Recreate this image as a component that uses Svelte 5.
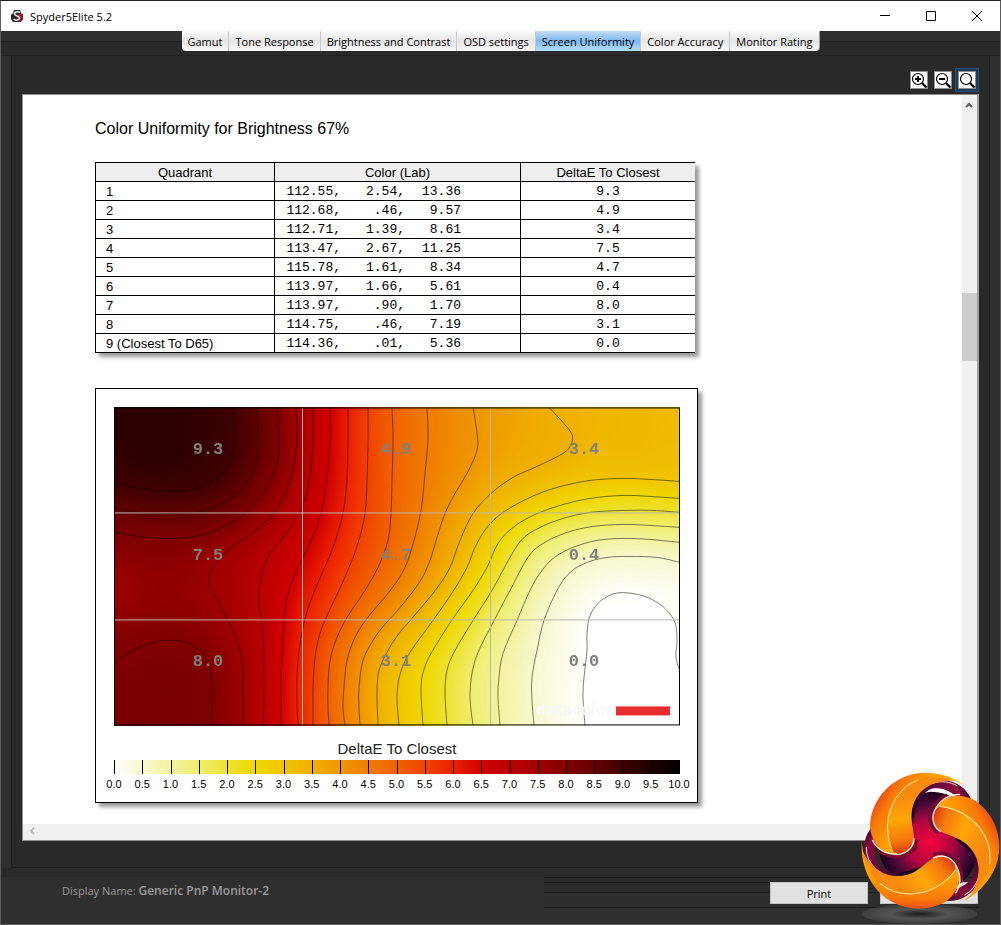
<script>
  import { onMount } from 'svelte'

  const tabs = [
    'Gamut', 'Tone Response', 'Brightness and Contrast', 'OSD settings',
    'Screen Uniformity', 'Color Accuracy', 'Monitor Rating',
  ]
  let activeTab = $state('Screen Uniformity')
  let zoomMode = $state('fit')

  const zoomButtons = [
    { id: 'in',  label: 'Zoom in',     mark: 'M5 8h6M8 5v6' },
    { id: 'out', label: 'Zoom out',    mark: 'M5 8h6' },
    { id: 'fit', label: 'Actual size', mark: '' },
  ]

  const rows = [
    { name: '1', lab: ['112.55,', '2.54,', '13.36'], delta: '9.3' },
    { name: '2', lab: ['112.68,', '.46,', '9.57'],   delta: '4.9' },
    { name: '3', lab: ['112.71,', '1.39,', '8.61'],  delta: '3.4' },
    { name: '4', lab: ['113.47,', '2.67,', '11.25'], delta: '7.5' },
    { name: '5', lab: ['115.78,', '1.61,', '8.34'],  delta: '4.7' },
    { name: '6', lab: ['113.97,', '1.66,', '5.61'],  delta: '0.4' },
    { name: '7', lab: ['113.97,', '.90,', '1.70'],   delta: '8.0' },
    { name: '8', lab: ['114.75,', '.46,', '7.19'],   delta: '3.1' },
    { name: '9 (Closest To D65)', lab: ['114.36,', '.01,', '5.36'], delta: '0.0' },
  ]

  // map units of the plot
  const X0 = 114
  const Y0 = 407
  const W = 566
  const H = 318

  // iso lines of the deltaE surface, [level, "x,y x,y ..."]
  const contours = [
    [9,   '233,407 234,440 231,458 224,472 208,484 190,489 168,491 140,488 114,483'],
    [8.5, '257,407 258,440 257,457 252,473 240,490 223,503 200,511 168,513 140,512 114,508'],
    [8,   '277,407 279,440 277,463 267,487 250,508 227,525 200,535 168,538 140,536 114,532'],
    [8,   '114,663 133,650 153,642 170,640 187,642 202,652 208,663 212,680 212,703 211,725'],
    [7.5, '296,407 297,440 294,463 287,490 273,513 253,532 230,548 213,566 209,581 217,600 228,620 237,640 242,660 243,675 243,700 243,725'],
    [7,   '313,407 313,440 310,477 302,507 287,532 270,553 262,573 259,593 260,610 263,633 264,663 264,697 263,725'],
    [6.5, '330,407 330,440 327,477 322,510 310,543 298,567 289,590 285,610 283,640 281,677 281,703 281,725'],
    [6,   '348,407 348,440 347,477 343,513 333,547 319,580 309,605 303,627 299,650 297,677 297,703 298,725'],
    [5.5, '368,407 368,440 367,480 365,513 358,543 349,567 339,590 328,613 320,633 315,657 313,687 313,707 313,725'],
    [5,   '392,407 393,440 392,480 391,513 388,540 378,567 365,590 347,617 337,637 330,660 328,687 328,707 329,725'],
    [4.5, '427,407 428,437 425,473 421,510 414,540 405,567 391,589 367,618 355,637 347,660 344,687 343,707 345,725'],
    [4,   '473,407 477,433 477,450 467,473 455,493 445,513 437,537 430,560 420,581 401,606 384,625 373,640 363,660 359,687 359,707 360,725'],
    [3.5, '549,407 563,422 572,434 571,444 563,453 537,466 513,477 491,493 473,513 460,540 450,567 436,589 412,618 399,633 388,650 379,670 377,693 378,725'],
    [3,   '680,481 650,479 623,478 590,480 557,487 530,497 503,512 487,527 475,547 467,567 453,591 433,620 410,652 400,674 397,697 399,725'],
    [2.5, '680,498 650,496 623,495 590,498 560,505 533,515 513,527 498,543 487,567 473,590 453,618 434,648 425,666 421,687 423,725'],
    [2,   '680,512 653,510 623,510 590,512 563,518 540,527 523,538 510,557 492,590 473,620 455,650 447,670 445,693 447,725'],
    [1.5, '680,527 650,525 623,524 593,526 567,532 543,543 528,557 510,590 493,622 478,652 472,673 470,697 473,725'],
    [1,   '680,542 650,539 623,538 597,540 573,547 553,558 540,573 530,590 517,620 503,653 499,677 498,697 500,725'],
    [0.5, '680,562 657,557 630,556 607,557 587,562 570,572 557,590 544,620 537,650 532,677 532,700 534,725'],
    [0,   '585,725 583,697 584,677 587,650 587,633 590,615 600,601 615,593 632,593 650,598 665,608 675,622 677,640 676,657 680,671'],
  ].map(([level, text]) => ({
    level,
    pts: text.split(' ').map(p => p.split(',').map(Number)),
  }))

  // local highs and lows between the lines, [x, y, value, radius]
  const peaks = [
    [160, 435, 9.3, 26], [165, 690, 8.15, 12], [125, 588, 7.6, 12],
    [630, 440, 3.3, 12], [635, 670, -0.1, 12],
  ]

  const palette = [
    [255, 255, 255], [248, 248, 208], [243, 243, 160], [240, 238, 110], [238, 226, 50],
    [240, 216, 0], [240, 196, 0], [240, 176, 0], [240, 150, 0], [240, 124, 0],
    [240, 98, 0], [240, 66, 0], [236, 32, 0], [208, 0, 0], [188, 0, 0],
    [160, 0, 0], [128, 0, 0], [98, 0, 0], [62, 0, 0], [32, 0, 0], [0, 0, 0],
  ]
  const rgb = c => `rgb(${c.join(',')})`

  function colorAt(v) {
    const t = Math.min(19.999, Math.max(0, v * 2))
    const i = Math.floor(t)
    return palette[i].map((c, k) => c + (palette[i + 1][k] - c) * (t - i))
  }

  // control points of the Catmull-Rom segment i
  function segment(pts, i) {
    const a = pts[Math.max(0, i - 1)]
    const b = pts[i]
    const c = pts[i + 1]
    const d = pts[Math.min(pts.length - 1, i + 2)]
    return [
      b,
      [b[0] + (c[0] - a[0]) / 6, b[1] + (c[1] - a[1]) / 6],
      [c[0] - (d[0] - b[0]) / 6, c[1] - (d[1] - b[1]) / 6],
      c,
    ]
  }

  function linePath(pts) {
    let d = `M${pts[0]}`
    for (let i = 0; i < pts.length - 1; i++) {
      const [, p, q, r] = segment(pts, i)
      d += `C${p} ${q} ${r}`
    }
    return d
  }

  const COLS = 284
  const ROWS = 160
  let canvas

  // fill the surface between the iso lines by relaxation
  function solveField() {
    const f = new Float32Array(COLS * ROWS).fill(4)
    const fixed = new Uint8Array(COLS * ROWS)
    const pin = (x, y, v) => {
      const cx = Math.min(COLS - 1, Math.max(0, Math.floor((x - X0) / W * COLS)))
      const cy = Math.min(ROWS - 1, Math.max(0, Math.floor((y - Y0) / H * ROWS)))
      f[cy * COLS + cx] = v
      fixed[cy * COLS + cx] = 1
    }
    for (const { level, pts } of contours) {
      for (let i = 0; i < pts.length - 1; i++) {
        const [p, q, r, s] = segment(pts, i)
        for (let t = 0; t <= 1; t += 0.02) {
          const u = 1 - t
          const mix = k => u*u*u*p[k] + 3*u*u*t*q[k] + 3*u*t*t*r[k] + t*t*t*s[k]
          pin(mix(0), mix(1), level)
        }
      }
    }
    for (const [x, y, v, r] of peaks) {
      for (let dx = -r; dx <= r; dx++)
        for (let dy = -r; dy <= r; dy++)
          if (dx * dx + dy * dy < r * r) pin(x + dx, y + dy, v)
    }
    const relax = (omega, free) => {
      for (let y = 0; y < ROWS; y++) {
        for (let x = 0; x < COLS; x++) {
          const n = y * COLS + x
          if (fixed[n] && !free) continue
          const avg = (
            f[x > 0 ? n - 1 : n] + f[x < COLS - 1 ? n + 1 : n] +
            f[y > 0 ? n - COLS : n] + f[y < ROWS - 1 ? n + COLS : n]
          ) / 4
          f[n] += omega * (avg - f[n])
        }
      }
    }
    for (let k = 0; k < 400; k++) relax(1.85, false)
    for (let k = 0; k < 16; k++) relax(1, true)
    return f
  }

  onMount(() => {
    const ctx = canvas.getContext('2d')
    const img = ctx.createImageData(COLS, ROWS)
    solveField().forEach((v, n) => {
      const c = colorAt(v)
      img.data.set([c[0], c[1], c[2], 255], n * 4)
    })
    ctx.putImageData(img, 0, 0)
  })

  const cellLabels = ['9.3', '4.9', '3.4', '7.5', '4.7', '0.4', '8.0', '3.1', '0.0']
  const ticks = Array.from({ length: 21 }, (_, i) => i / 2)
</script>

<div class="window">
  <header class="titlebar">
    <svg class="app-icon" viewBox="0 0 14 14" aria-hidden="true">
      <path d="M4 1h6l1 3 2 2v4l-2 3H3L1 10V6l2-2z" fill="#2a2426" />
      <path d="M8 5h5v5l-3 3-2-2z" fill="#a3122c" />
      <path d="M10 3.500C7 2 4 3 4.500 5S9.500 7 9.500 9 6 12 3.500 10" fill="none" stroke="#e8e8e8" stroke-width="1.600" />
    </svg>
    <span class="title">Spyder5Elite 5.2</span>
    <div class="controls">
      <button aria-label="Minimize"><svg viewBox="0 0 12 12"><path d="M1 5.500h10" /></svg></button>
      <button aria-label="Maximize"><svg viewBox="0 0 12 12"><path d="M1.500 1.500h9v9h-9z" /></svg></button>
      <button aria-label="Close window"><svg viewBox="0 0 12 12"><path d="M1 1l10 10M11 1L1 11" /></svg></button>
    </div>
  </header>

  <div class="tab-strip">
    <nav class="tabs">
      {#each tabs as tab}
        <button class="tab" class:active={activeTab === tab} onclick={() => activeTab = tab}>{tab}</button>
      {/each}
    </nav>
  </div>

  <main class="pane">
    <div class="toolbar">
      {#each zoomButtons as z}
        <button class="zoom" class:focused={zoomMode === z.id} aria-label={z.label} onclick={() => zoomMode = z.id}>
          <svg viewBox="0 0 18 18">
            <rect x="0.500" y="0.500" width="17" height="17" fill="#fff" stroke="#8d8d8d" />
            <circle cx="8" cy="8" r="5.500" fill="none" stroke="#000" stroke-width="1.200" />
            <path d="M12 12l4.500 4.500" stroke="#000" stroke-width="2.400" />
            <path d={z.mark} stroke="#000" stroke-width="2" />
          </svg>
        </button>
      {/each}
    </div>

    <div class="viewer">
      <article class="page">
        <h1>Color Uniformity for Brightness 67%</h1>

        <table>
          <thead>
            <tr><th class="c-name">Quadrant</th><th class="c-lab">Color (Lab)</th><th>DeltaE To Closest</th></tr>
          </thead>
          <tbody>
            {#each rows as row}
              <tr>
                <td class="name">{row.name}</td>
                <td>
                  <div class="lab">
                    {#each row.lab as v}<span>{v}</span>{/each}
                  </div>
                </td>
                <td class="delta">{row.delta}</td>
              </tr>
            {/each}
          </tbody>
        </table>

        <section class="card">
          <div class="plot">
            <canvas bind:this={canvas} width={COLS} height={ROWS}></canvas>
            <svg viewBox="{X0} {Y0} {W} {H}">
              {#each contours as c}
                <path class="iso" d={linePath(c.pts)} />
              {/each}
              <path class="grid" d="M302.500 407v318M490.500 407v318M114 512.500h566M114 619.500h566" />
              {#each cellLabels as label, i}
                <text class="cell" x={208 + (i % 3) * 188} y={454 + Math.floor(i / 3) * 106}>{label}</text>
              {/each}
              <text class="brand" x="536" y="715">datacolor</text>
              <rect x="616" y="706" width="54" height="9" fill="#eb2d2f" />
              <rect x="114.500" y="407.500" width="565" height="317" fill="none" stroke="#000" />
            </svg>
          </div>

          <h2>DeltaE To Closest</h2>
          <svg class="legend" viewBox="0 0 566 30">
            <defs>
              <linearGradient id="scale">
                {#each palette as c, i}
                  <stop offset={i / 20} stop-color={rgb(c)} />
                {/each}
              </linearGradient>
            </defs>
            <rect width="566" height="14" fill="url(#scale)" />
            {#each ticks as t, i}
              <path class="tick" d="M{Math.round(i * 28.25) + 0.5} 0v14" />
              <text x={i * 28.25} y="28">{t.toFixed(1)}</text>
            {/each}
          </svg>
        </section>
      </article>

      <div class="vbar">
        <svg class="arrow" viewBox="0 0 8 8"><path d="M1 6l3-3 3 3" /></svg>
        <div class="thumb"></div>
      </div>
      <div class="hbar">
        <svg class="arrow" viewBox="0 0 8 8"><path d="M6 1L3 4l3 3" /></svg>
      </div>
    </div>
  </main>

  <footer>
    <p>Display Name: <b>Generic PnP Monitor-2</b></p>
    <div class="actions">
      <button>Print</button>
      <button aria-label="Close"></button>
    </div>
  </footer>

  <svg class="logo" viewBox="0 0 483 495" aria-hidden="true">
    <defs>
      <radialGradient id="core" gradientUnits="userSpaceOnUse" cx="268" cy="248" r="165">
        <stop offset="0" stop-color="#f5053c" />
        <stop offset="0.400" stop-color="#b4063f" />
        <stop offset="0.700" stop-color="#4a0838" />
        <stop offset="1" stop-color="#0c0014" />
      </radialGradient>
      <linearGradient id="rim" gradientUnits="userSpaceOnUse" x1="212" y1="170" x2="397" y2="90">
        <stop offset="0" stop-color="#12001c" />
        <stop offset="0.450" stop-color="#5a0a3c" />
        <stop offset="0.800" stop-color="#8c0a3c" />
        <stop offset="1" stop-color="#16001e" />
      </linearGradient>
      <linearGradient id="outer" gradientUnits="userSpaceOnUse" x1="80" y1="110" x2="190" y2="180">
        <stop offset="0" stop-color="#e0281a" />
        <stop offset="0.500" stop-color="#f97a08" />
        <stop offset="1" stop-color="#ffa000" />
      </linearGradient>
      <linearGradient id="inner" gradientUnits="userSpaceOnUse" x1="170" y1="110" x2="200" y2="284">
        <stop offset="0" stop-color="#f98a10" />
        <stop offset="0.400" stop-color="#ffa608" />
        <stop offset="0.750" stop-color="#f5780c" />
        <stop offset="1" stop-color="#dc2e16" />
      </linearGradient>
      <radialGradient id="shadow">
        <stop offset="0" stop-color="#1c1c1c" />
        <stop offset="0.500" stop-color="#545454" />
        <stop offset="1" stop-color="#555" stop-opacity="0.400" />
      </radialGradient>
    </defs>
    <ellipse cx="238" cy="462" rx="174" ry="29" fill="url(#shadow)" />
    <circle cx="268" cy="248" r="72" fill="url(#core)" />
    {#each [0, 120, 240] as a}
      <g transform="rotate({a} 268 248)">
        <path fill="url(#core)" d="M205 262C228 232 206 190 216 150C224 114 244 96 272 95C305 96 334 106 354 120C310 118 285 145 287 185C290 222 315 242 345 248L268 300Z" />
        <path fill="none" stroke="#1b0018" stroke-width="12" d="M325 128C285 130 264 160 278 210" />
      </g>
    {/each}
    {#each [0, 120, 240] as a}
      <g transform="rotate({a} 268 248)">
        <path fill="url(#rim)" d="M212 168C212 108 255 60 305 59C350 61 386 88 397 128C385 120 370 117 355 118C338 94 308 82 282 85C248 90 226 132 219 190Z" />
        <path fill="none" stroke="#e8d8dc" stroke-width="3" d="M228 108C250 72 305 50 352 78" />
        <path fill="none" stroke="#7a0a34" stroke-width="10" d="M118 272C146 300 222 300 231 240" />
      </g>
    {/each}
    {#each [0, 120, 240] as a}
      <g transform="rotate({a} 268 248)">
        <path fill="url(#outer)" d="M372 74C330 46 290 38 250 38C160 42 92 115 90 200C95 250 125 282 170 284L245 56C290 48 335 56 372 74Z" />
        <path fill="url(#inner)" d="M345 62C300 48 262 48 235 58C160 88 118 180 160 276C198 292 222 264 222 235C222 210 212 190 215 160C220 105 262 58 345 62Z" />
        <path fill="none" stroke="#ffe9a8" stroke-width="3" d="M235 59C160 88 118 180 158 276" />
        <path fill="none" stroke="#fff2dc" stroke-width="4" d="M97 240C110 268 138 283 170 283C200 283 222 262 222 235" />
      </g>
    {/each}
  </svg>
</div>

<style>
  :global(body) {
    margin: 0;
    background: #2f2f2f;
  }

  .window {
    position: relative;
    display: flex;
    flex-direction: column;
    box-sizing: border-box;
    min-height: 100vh;
    border: 1px solid #5c5c60;
    border-top-color: #231f20;
    background: #2f2f2f;
    font-family: "Open Sans", "Noto Sans", sans-serif;
    font-size: 11px;
    color: #000;
  }

  button {
    margin: 0;
    padding: 0;
    border: 0;
    font: inherit;
    color: inherit;
  }

  .titlebar {
    display: flex;
    align-items: center;
    height: 30px;
    padding-left: 9px;
    background: #fff;
  }
  .app-icon { width: 14px; height: 14px; }
  .title { flex: 1; margin-left: 6px; }

  .controls { display: flex; }
  .controls button {
    display: grid;
    place-items: center;
    width: 46px;
    height: 30px;
    background: none;
  }
  .controls svg {
    width: 12px;
    height: 12px;
    fill: none;
    stroke: #000;
  }

  .tab-strip {
    display: flex;
    justify-content: center;
    height: 24px;
    background: linear-gradient(#2f2f2f 10px, #222 10px, #222 11px, #2a2a2a 11px);
    border-bottom: 1px solid #212121;
  }
  .tabs {
    display: flex;
    height: 20px;
    border-radius: 0 0 4px 4px;
    overflow: hidden;
    border-right: 1px solid #999;
  }
  .tab {
    padding: 0 6px;
    border-right: 1px solid #c8c8c8;
    background: linear-gradient(#fafafa, #e6e6e6 50%, #f6f6f6);
    white-space: nowrap;
  }
  .tab:last-child { border-right: 0; }
  .tab.active { background: linear-gradient(#c4dcf5, #7db8ee 50%, #b4e0ff); }

  .pane {
    flex: 1;
    display: flex;
    flex-direction: column;
    margin: 0 10px;
    padding: 0 10px 26px;
    border: solid #1f1f1f;
    border-width: 0 1px 1px;
    background: #292929;
  }

  .toolbar {
    display: flex;
    justify-content: flex-end;
    align-items: flex-end;
    height: 38px;
    padding-bottom: 2px;
    box-sizing: border-box;
  }
  .zoom {
    width: 24px;
    height: 24px;
    padding: 3px;
    background: none;
  }
  .zoom.focused { background: #1d3c58; box-shadow: inset 0 0 0 1px #24527c; }
  .zoom svg { display: block; width: 18px; height: 18px; }

  .viewer {
    flex: 1;
    display: grid;
    grid-template: 1fr 16px / 1fr 15px;
    border: 1px solid #8e8e8e;
    border-right: 2px solid #a0a0a0;
    background: #fff;
  }

  .page {
    max-width: 603px;
    padding: 24px 72px 20px;
    font-family: "Liberation Sans", Arial, sans-serif;
  }
  h1 {
    margin: 0 0 24px;
    font-size: 16px;
    font-weight: 400;
    line-height: 19px;
  }
  h2 {
    margin: 13px 0 2px;
    font-size: 15px;
    font-weight: 400;
    line-height: 19px;
    text-align: center;
    color: #222;
  }

  table {
    width: 600px;
    max-width: 100%;
    table-layout: fixed;
    border-spacing: 0;
    border-left: 1px solid #000;
    border-top: 1px solid #000;
    box-shadow: 4px 4px 4px #999;
    background: #fff;
    font-size: 13px;
    line-height: 17px;
  }
  th, td {
    height: 17px;
    padding: 1px 0 0;
    border-right: 1px solid #000;
    border-bottom: 1px solid #000;
    font-weight: 400;
  }
  th { background: #eee; }
  th:last-child, td:last-child { border-right: 0; }
  .c-name { width: 178px; }
  .c-lab { width: 245px; }
  .name { padding-left: 10px; }
  .lab, .delta { font-family: "Liberation Mono", monospace; }
  .delta { text-align: center; }
  .lab {
    display: grid;
    grid-template-columns: 56px 64px 56px;
    padding-left: 10px;
    text-align: right;
  }

  .card {
    box-sizing: border-box;
    margin-top: 35px;
    padding: 18px 17px 12px 18px;
    border: 1px solid #000;
    box-shadow: 4px 4px 4px #999;
    background: #fff;
  }
  .plot { display: grid; }
  .plot canvas, .plot svg {
    grid-area: 1 / 1;
    display: block;
    width: 100%;
    height: 100%;
  }
  .iso { fill: none; stroke: #000; stroke-opacity: 0.5; }
  .grid { fill: none; stroke: #bdb8b0; }
  .cell {
    font: bold 17px "Liberation Mono", monospace;
    text-anchor: middle;
    fill: #808080;
  }
  .brand {
    font: bold 16px "Open Sans", sans-serif;
    fill: #f8f8f6;
  }

  .legend {
    display: block;
    width: 100%;
    overflow: visible;
  }
  .legend text {
    font-size: 11px;
    text-anchor: middle;
  }
  .tick { stroke: #000; }

  .vbar, .hbar { background: #f0f0f0; }
  .vbar { padding-top: 6px; }
  .arrow {
    display: block;
    width: 8px;
    height: 8px;
    fill: none;
    stroke: #606060;
    stroke-width: 2;
  }
  .vbar .arrow { margin: 0 auto 184px 3px; }
  .thumb { height: 68px; background: #cdcdcd; }
  .hbar {
    grid-column: 1 / -1;
    padding: 3px 5px;
    box-sizing: border-box;
  }
  .hbar .arrow { stroke: #bdbdbd; }

  footer {
    display: flex;
    justify-content: space-between;
    height: 47px;
    padding: 9px 22px 0 61px;
    background: linear-gradient(#2a2a2a 9px, #2f2f2f 9px);
  }
  footer p {
    margin: 5px 0 0;
    line-height: 18px;
    color: #9a9a9a;
  }
  footer b { font-size: 12px; font-weight: 600; }
  .actions {
    display: flex;
    flex: 0 1 434px;
    justify-content: flex-end;
    gap: 12px;
    height: 31px;
    padding-top: 5px;
    box-sizing: border-box;
    background: linear-gradient(
      #1f1f1f 1px, #2b2b2b 1px 5px, #1f1f1f 5px 6px, #2b2b2b 6px 15px,
      #1f1f1f 15px 16px, #2e2e2e 16px 30px, #1f1f1f 30px
    );
  }
  .actions button {
    width: 98px;
    height: 22px;
    background: #e1e1e1;
    border: 1px solid #c4c4c4;
  }

  .logo {
    position: absolute;
    right: -1px;
    bottom: -1px;
    width: 161px;
    height: 165px;
  }
</style>
